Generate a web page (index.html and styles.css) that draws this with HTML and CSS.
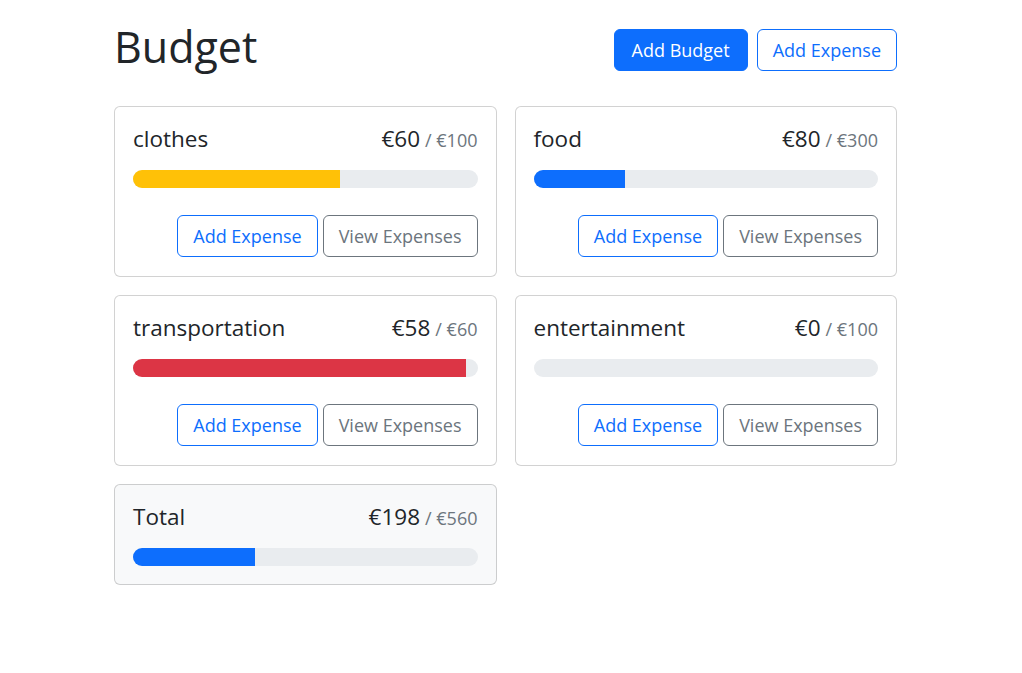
FILE: index.html
```html
<!DOCTYPE html>
<html lang="en">
<head>
<meta charset="utf-8">
<title>Budget</title>
<link rel="stylesheet" href="styles.css">
</head>
<body>
<div class="container">
  <header class="header">
    <h1 class="page-title">Budget</h1>
    <div class="header-actions">
      <button class="btn btn-primary btn-wide">Add Budget</button>
      <button class="btn btn-outline-primary">Add Expense</button>
    </div>
  </header>
  <div class="grid">
    <div class="card">
      <div class="card-title">
        <div class="name">clothes</div>
        <div class="amount">€60<span class="max">/ €100</span></div>
      </div>
      <div class="progress"><div class="bar bar-warning" style="width: 60%"></div></div>
      <div class="actions">
        <button class="btn btn-outline-primary">Add Expense</button>
        <button class="btn btn-outline-secondary">View Expenses</button>
      </div>
    </div>
    <div class="card">
      <div class="card-title">
        <div class="name">food</div>
        <div class="amount">€80<span class="max">/ €300</span></div>
      </div>
      <div class="progress"><div class="bar bar-primary" style="width: 26.67%"></div></div>
      <div class="actions">
        <button class="btn btn-outline-primary">Add Expense</button>
        <button class="btn btn-outline-secondary">View Expenses</button>
      </div>
    </div>
    <div class="card">
      <div class="card-title">
        <div class="name">transportation</div>
        <div class="amount">€58<span class="max">/ €60</span></div>
      </div>
      <div class="progress"><div class="bar bar-danger" style="width: 96.67%"></div></div>
      <div class="actions">
        <button class="btn btn-outline-primary">Add Expense</button>
        <button class="btn btn-outline-secondary">View Expenses</button>
      </div>
    </div>
    <div class="card">
      <div class="card-title">
        <div class="name">entertainment</div>
        <div class="amount">€0<span class="max">/ €100</span></div>
      </div>
      <div class="progress"><div class="bar bar-primary" style="width: 0%"></div></div>
      <div class="actions">
        <button class="btn btn-outline-primary">Add Expense</button>
        <button class="btn btn-outline-secondary">View Expenses</button>
      </div>
    </div>
    <div class="card card-light">
      <div class="card-title">
        <div class="name">Total</div>
        <div class="amount">€198<span class="max">/ €560</span></div>
      </div>
      <div class="progress"><div class="bar bar-primary" style="width: 35.36%"></div></div>
    </div>
  </div>
</div>
</body>
</html>
```
FILE: styles.css
```css
* { box-sizing: border-box; }
html, body { margin: 0; padding: 0; }
body {
  font-family: "Open Sans", "Noto Sans", sans-serif;
  color: #212529;
  background: #fff;
  padding-right: 11px;
}
.container {
  width: 783px;
  margin: 0 auto;
  padding-top: 18px;
}
.header {
  display: flex;
  align-items: center;
  justify-content: space-between;
  height: 63px;
  margin-bottom: 25px;
}
.page-title {
  margin: 0;
  font-size: 43px;
  font-weight: 400;
  line-height: 54px;
  margin-top: -6px;
}
.header-actions {
  display: flex;
  gap: 9px;
}
.btn {
  font-family: inherit;
  font-size: 18px;
  line-height: 26px;
  height: 42px;
  padding: 0 15px;
  border-radius: 6px;
  border: 1px solid transparent;
  background: #fff;
  cursor: pointer;
}
.btn-wide { padding: 0 17px; }
.btn-primary { background: #0d6efd; border-color: #0d6efd; color: #fff; }
.btn-outline-primary { color: #0d6efd; border-color: #0d6efd; }
.btn-outline-secondary { color: #6c757d; border-color: #6c757d; }
.grid {
  display: grid;
  grid-template-columns: 1fr 1fr;
  column-gap: 18px;
  row-gap: 18px;
  align-items: start;
}
.card {
  border: 1px solid rgba(0,0,0,.175);
  border-radius: 6px;
  padding: 18px;
  background: #fff;
}
.card-light { background: #f8f9fa; }
.card-title {
  display: flex;
  justify-content: space-between;
  align-items: baseline;
  font-size: 22.5px;
  line-height: 27px;
  margin-bottom: 18px;
}
.max {
  font-size: 18px;
  line-height: 1;
  color: #6c757d;
  margin-left: 5px;
}
.progress {
  height: 18px;
  border-radius: 9px;
  background: #e9ecef;
  overflow: hidden;
}
.bar { height: 100%; }
.bar-primary { background: #0d6efd; }
.bar-warning { background: #ffc107; }
.bar-danger { background: #dc3545; }
.actions {
  display: flex;
  justify-content: flex-end;
  gap: 5px;
  margin-top: 27px;
  margin-bottom: 1px;
}
```
